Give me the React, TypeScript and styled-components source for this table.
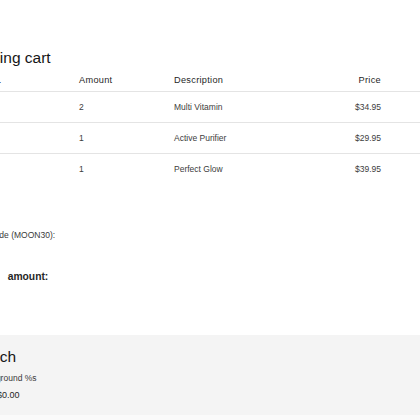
import React from "react";
import styled, { createGlobalStyle } from "styled-components";

const Global = createGlobalStyle`
  html, body { margin: 0; padding: 0; background: #ffffff; overflow: hidden; }
  body { font-family: "Liberation Sans", Arial, sans-serif; color: #161616; }
`;

const Page = styled.div`
  width: 470px;
  margin-left: -50px;
  display: flex;
  flex-direction: column;
`;

const Section = styled.section`
  padding-top: 47px;
  display: flex;
  flex-direction: column;
`;

const Title = styled.h2<{ $indent?: number }>`
  margin: 0;
  padding-left: ${(p) => p.$indent ?? 0}px;
  font-size: 15.5px;
  font-weight: 400;
  line-height: 22px;
  color: #161616;
`;

const Row = styled.div<{ $head?: boolean; $last?: boolean }>`
  display: grid;
  grid-template-columns: 113px 95px 150px 89px 1fr;
  box-sizing: border-box;
  height: ${(p) => (p.$head ? 23 : 31)}px;
  align-items: center;
  border-bottom: 1px solid ${(p) => (p.$last ? "transparent" : "#e4e4e4")};
  font-size: ${(p) => (p.$head ? 9.2 : 8.5)}px;
  letter-spacing: ${(p) => (p.$head ? 0.3 : 0)}px;
  color: ${(p) => (p.$head ? "#1f1f1f" : "#3d3d3d")};
`;

const Cell = styled.div<{ $right?: boolean }>`
  padding: 0 16px;
  text-align: ${(p) => (p.$right ? "right" : "left")};
  white-space: nowrap;
`;

const Promo = styled.div`
  margin-top: 45px;
  padding-left: 13px;
  font-size: 8.5px;
  line-height: 11px;
  color: #393939;
`;

const Total = styled.div`
  margin-top: 29px;
  padding-left: 24px;
  font-size: 10.3px;
  line-height: 14px;
  font-weight: 700;
  word-spacing: 7px;
  color: #262626;
`;

const Panel = styled.div`
  margin-top: 51px;
  background: #f4f4f4;
  height: 80px;
  padding-top: 11px;
  box-sizing: border-box;
  display: flex;
  flex-direction: column;
`;

const PanelLabel = styled.div`
  margin-top: 5px;
  padding-left: 27px;
  font-size: 8.5px;
  line-height: 11px;
  color: #393939;
`;

const PanelValue = styled.div`
  margin-top: 5px;
  padding-left: 47px;
  font-size: 9px;
  line-height: 12px;
  color: #262626;
`;

const Footer = styled.div`
  height: 20px;
  background: #fafafa;
`;

const items = [
  { id: "100-21", amount: 2, desc: "Multi Vitamin", price: "$34.95" },
  { id: "100-22", amount: 1, desc: "Active Purifier", price: "$29.95" },
  { id: "100-23", amount: 1, desc: "Perfect Glow", price: "$39.95" },
];

export default function App() {
  return (
    <>
      <Global />
      <Page>
        <Section>
          <Title $indent={5}>Shopping cart</Title>
          <Row $head>
            <Cell>Item no.</Cell>
            <Cell>Amount</Cell>
            <Cell>Description</Cell>
            <Cell $right>Price</Cell>
            <Cell />
          </Row>
          {items.map((it, i) => (
            <Row key={it.id} $last={i === items.length - 1}>
              <Cell>{it.id}</Cell>
              <Cell>{it.amount}</Cell>
              <Cell>{it.desc}</Cell>
              <Cell $right>{it.price}</Cell>
              <Cell />
            </Row>
          ))}
          <Promo>Promo code (MOON30):</Promo>
          <Total>Total amount:</Total>
        </Section>
        <Panel>
          <Title $indent={17}>Search</Title>
          <PanelLabel>Background %s</PanelLabel>
          <PanelValue>$0.00</PanelValue>
        </Panel>
        <Footer />
      </Page>
    </>
  );
}
